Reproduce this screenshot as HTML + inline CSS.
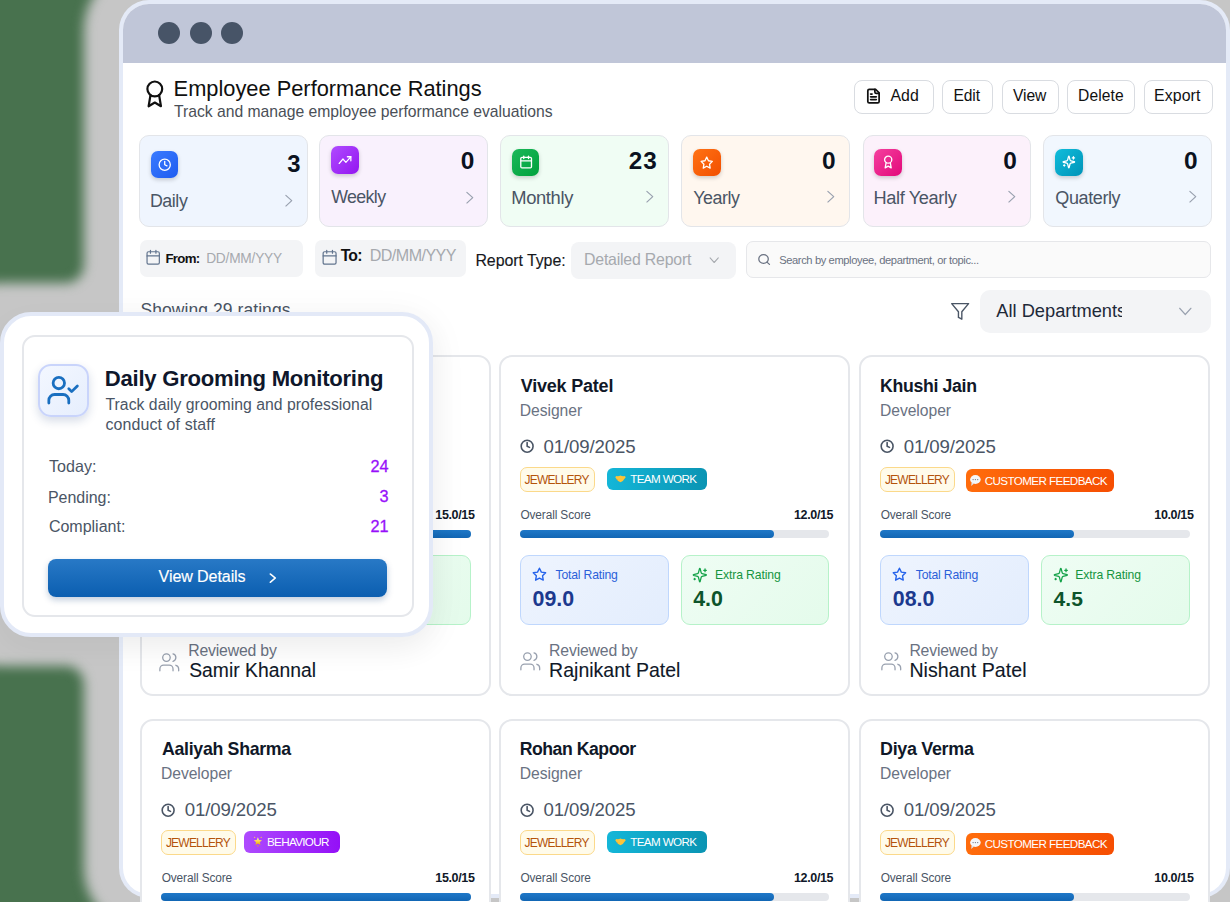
<!DOCTYPE html>
<html><head><meta charset="utf-8"><title>Employee Performance Ratings</title><style>
html,body{margin:0;padding:0;}
body{width:1230px;height:902px;overflow:hidden;position:relative;background:#48724e;font-family:"Liberation Sans", sans-serif;}
.a{position:absolute;box-sizing:border-box;}
.t{position:absolute;line-height:1;white-space:nowrap;}
svg.a{overflow:visible;}
</style></head><body>
<svg class="a" style="left:0;top:0;filter:blur(6px);" width="1230" height="902" viewBox="0 0 1230 902"><g fill="#c6c6c6"><rect x="84" y="-35" width="1200" height="968" rx="65" ry="65"/><rect x="-60" y="283" width="522" height="383" rx="60" ry="60"/><path d="M 84 265 L 84 283 L 66 283 A 18 18 0 0 0 84 265 Z"/><path d="M 84 684 L 84 666 L 66 666 A 18 18 0 0 1 84 684 Z"/></g></svg>
<div class="a" style="left:119px;top:0px;width:1111px;height:898px;background:#e4eaf7;border-radius:30px;"></div>
<div class="a" style="left:123px;top:4px;width:1103px;height:890px;background:#ffffff;border-radius:26px;overflow:hidden;"></div>
<div class="a" style="left:123px;top:4px;width:1103px;height:59px;background:#c0c6d8;border-radius:26px 26px 0 0;"></div>
<div class="a" style="left:158px;top:22px;width:22px;height:22px;background:#475467;border-radius:50%;"></div>
<div class="a" style="left:190px;top:22px;width:22px;height:22px;background:#475467;border-radius:50%;"></div>
<div class="a" style="left:221px;top:22px;width:22px;height:22px;background:#475467;border-radius:50%;"></div>
<svg class="a" style="left:139.7px;top:78.62px;" width="29.6" height="29.76" viewBox="0 0 24 24" preserveAspectRatio="none" fill="none" stroke="#101010" stroke-width="1.779" stroke-linecap="round" stroke-linejoin="round"><circle cx="12" cy="8" r="6"/><path d="M15.477 12.89 17 22l-5-3-5 3 1.523-9.11"/></svg>
<div class="t" id="t1" style="top:78px;font-size:21.83px;color:#101010;letter-spacing:-0.005px;left:173.6px;">Employee Performance Ratings</div>
<div class="t" id="t2" style="top:104px;font-size:15.72px;color:#4a4f57;letter-spacing:-0.020px;left:174px;">Track and manage employee performance evaluations</div>
<div class="a" style="left:854px;top:80.3px;width:80px;height:33.5px;background:#fff;border:1px solid #d9dce1;border-radius:8px;"></div>
<div class="t" id="t3" style="top:88px;font-size:15.85px;color:#111111;letter-spacing:0.110px;left:890.4px;">Add</div>
<div class="a" style="left:942px;top:80.3px;width:50.5px;height:33.5px;background:#fff;border:1px solid #d9dce1;border-radius:8px;"></div>
<div class="t" id="t4" style="top:88px;font-size:15.61px;color:#111111;letter-spacing:-0.087px;left:953.4px;">Edit</div>
<div class="a" style="left:1001.7px;top:80.3px;width:57.3px;height:33.5px;background:#fff;border:1px solid #d9dce1;border-radius:8px;"></div>
<div class="t" id="t5" style="top:88px;font-size:15.64px;color:#111111;letter-spacing:-0.100px;left:1013px;">View</div>
<div class="a" style="left:1067.3px;top:80.3px;width:67.7px;height:33.5px;background:#fff;border:1px solid #d9dce1;border-radius:8px;"></div>
<div class="t" id="t6" style="top:88px;font-size:15.61px;color:#111111;letter-spacing:0.112px;left:1078px;">Delete</div>
<div class="a" style="left:1144.4px;top:80.3px;width:68.4px;height:33.5px;background:#fff;border:1px solid #d9dce1;border-radius:8px;"></div>
<div class="t" id="t7" style="top:88px;font-size:15.9px;color:#111111;letter-spacing:0.098px;left:1154px;">Export</div>
<svg class="a" style="left:865.03px;top:88.19px;" width="16.95" height="16.32" viewBox="0 0 24 24" preserveAspectRatio="none" fill="none" stroke="#111111" stroke-width="2.453" stroke-linecap="round" stroke-linejoin="round"><path d="M15 2H6a2 2 0 0 0-2 2v16a2 2 0 0 0 2 2h12a2 2 0 0 0 2-2V7Z"/><path d="M14 2v4a2 2 0 0 0 2 2h4"/><path d="M10 9H8"/><path d="M16 13H8"/><path d="M16 17H8"/></svg>
<div class="a" style="left:139px;top:135.1px;width:169px;height:91.6px;background:#eff5fe;border:1px solid #e3e5e9;border-radius:10px;"></div>
<div class="a" style="left:150.6px;top:150.5px;width:27.5px;height:27.5px;background:linear-gradient(135deg,#3a7bff,#1f5cf0);border-radius:7px;box-shadow:0 2px 4px rgba(0,0,0,0.18);"></div>
<svg class="a" style="left:157.63px;top:157.53px;" width="13.44" height="13.44" viewBox="0 0 24 24" preserveAspectRatio="none" fill="none" stroke="#ffffff" stroke-width="2.321" stroke-linecap="round" stroke-linejoin="round"><circle cx="12" cy="12" r="10"/><polyline points="12 6 12 12 16 14"/></svg>
<div class="t" id="t8" style="top:152px;font-size:23.81px;color:#0b1220;font-weight:700;right:929.57px;">3</div>
<div class="t" id="t9" style="top:193px;font-size:17.84px;color:#4a5565;letter-spacing:-0.428px;left:149.9px;">Daily</div>
<svg class="a" style="left:277.1px;top:190.2px;" width="23.6" height="21.4" viewBox="0 0 24 24" preserveAspectRatio="none" fill="none" stroke="#99a1af" stroke-width="1.173" stroke-linecap="round" stroke-linejoin="round"><path d="m9 18 6-6-6-6"/></svg>
<div class="a" style="left:319.4px;top:135.1px;width:169px;height:91.6px;background:#f9f1fd;border:1px solid #e3e5e9;border-radius:10px;"></div>
<div class="a" style="left:331px;top:146.4px;width:27.5px;height:27.5px;background:linear-gradient(135deg,#b04cff,#9315f0);border-radius:7px;box-shadow:0 2px 4px rgba(0,0,0,0.18);"></div>
<svg class="a" style="left:337.78px;top:151.86px;" width="14.04" height="16.08" viewBox="0 0 24 24" preserveAspectRatio="none" fill="none" stroke="#ffffff" stroke-width="2.072" stroke-linecap="round" stroke-linejoin="round"><polyline points="22 7 13.5 15.5 8.5 10.5 2 17"/><polyline points="16 7 22 7 22 13"/></svg>
<div class="t" id="t10" style="top:149px;font-size:24.43px;color:#0b1220;font-weight:700;right:755.62px;">0</div>
<div class="t" id="t11" style="top:189px;font-size:17.76px;color:#4a5565;letter-spacing:-0.619px;left:331.3px;">Weekly</div>
<svg class="a" style="left:457.5px;top:186.7px;" width="23.6" height="21.4" viewBox="0 0 24 24" preserveAspectRatio="none" fill="none" stroke="#99a1af" stroke-width="1.173" stroke-linecap="round" stroke-linejoin="round"><path d="m9 18 6-6-6-6"/></svg>
<div class="a" style="left:500.3px;top:135.1px;width:168.7px;height:91.6px;background:#f0fdf4;border:1px solid #e3e5e9;border-radius:10px;"></div>
<div class="a" style="left:511.9px;top:148.6px;width:27.5px;height:27.5px;background:linear-gradient(135deg,#1cb85a,#00a13c);border-radius:7px;box-shadow:0 2px 4px rgba(0,0,0,0.18);"></div>
<svg class="a" style="left:518.57px;top:155.28px;" width="14.27" height="14.04" viewBox="0 0 24 24" preserveAspectRatio="none" fill="none" stroke="#ffffff" stroke-width="2.204" stroke-linecap="round" stroke-linejoin="round"><rect width="18" height="18" x="3" y="4" rx="2"/><path d="M16 2v4"/><path d="M8 2v4"/><path d="M3 10h18"/></svg>
<div class="t" id="t12" style="top:149px;font-size:24.24px;color:#0b1220;font-weight:700;letter-spacing:1.022px;right:572.3px;">23</div>
<div class="t" id="t13" style="top:189px;font-size:18.36px;color:#4a5565;letter-spacing:-0.351px;left:511.2px;">Monthly</div>
<svg class="a" style="left:638.1px;top:186.4px;" width="23.6" height="21.4" viewBox="0 0 24 24" preserveAspectRatio="none" fill="none" stroke="#99a1af" stroke-width="1.173" stroke-linecap="round" stroke-linejoin="round"><path d="m9 18 6-6-6-6"/></svg>
<div class="a" style="left:681.4px;top:135.1px;width:168.3px;height:91.6px;background:#fff7ef;border:1px solid #e3e5e9;border-radius:10px;"></div>
<div class="a" style="left:693px;top:148.6px;width:27.5px;height:27.5px;background:linear-gradient(135deg,#ff7214,#f24f00);border-radius:7px;box-shadow:0 2px 4px rgba(0,0,0,0.18);"></div>
<svg class="a" style="left:700.03px;top:155.59px;" width="13.44" height="13.88" viewBox="0 0 24 24" preserveAspectRatio="none" fill="none" stroke="#ffffff" stroke-width="2.284" stroke-linecap="round" stroke-linejoin="round"><polygon points="12 2 15.09 8.26 22 9.27 17 14.14 18.18 21.02 12 17.77 5.82 21.02 7 14.14 2 9.27 8.91 8.26 12 2"/></svg>
<div class="t" id="t14" style="top:149px;font-size:24.43px;color:#0b1220;font-weight:700;right:394.32px;">0</div>
<div class="t" id="t15" style="top:190px;font-size:17.85px;color:#4a5565;letter-spacing:-0.463px;left:693.3px;">Yearly</div>
<svg class="a" style="left:818.8px;top:186.4px;" width="23.6" height="21.4" viewBox="0 0 24 24" preserveAspectRatio="none" fill="none" stroke="#99a1af" stroke-width="1.173" stroke-linecap="round" stroke-linejoin="round"><path d="m9 18 6-6-6-6"/></svg>
<div class="a" style="left:862.6px;top:135.1px;width:168.3px;height:91.6px;background:#fcf1fb;border:1px solid #e3e5e9;border-radius:10px;"></div>
<div class="a" style="left:874.2px;top:148.6px;width:27.5px;height:27.5px;background:linear-gradient(135deg,#f5409f,#e2097a);border-radius:7px;box-shadow:0 2px 4px rgba(0,0,0,0.18);"></div>
<svg class="a" style="left:880.75px;top:155.38px;" width="14.4" height="14.04" viewBox="0 0 24 24" preserveAspectRatio="none" fill="none" stroke="#ffffff" stroke-width="2.194" stroke-linecap="round" stroke-linejoin="round"><circle cx="12" cy="8" r="6"/><path d="M15.477 12.89 17 22l-5-3-5 3 1.523-9.11"/></svg>
<div class="t" id="t16" style="top:149px;font-size:24.43px;color:#0b1220;font-weight:700;right:213.12px;">0</div>
<div class="t" id="t17" style="top:189px;font-size:18.18px;color:#4a5565;letter-spacing:-0.362px;left:873.5px;">Half Yearly</div>
<svg class="a" style="left:1000px;top:186.4px;" width="23.6" height="21.4" viewBox="0 0 24 24" preserveAspectRatio="none" fill="none" stroke="#99a1af" stroke-width="1.173" stroke-linecap="round" stroke-linejoin="round"><path d="m9 18 6-6-6-6"/></svg>
<div class="a" style="left:1043.4px;top:135.1px;width:168.3px;height:91.6px;background:#f1f7fe;border:1px solid #e3e5e9;border-radius:10px;"></div>
<div class="a" style="left:1055px;top:148.6px;width:27.5px;height:27.5px;background:linear-gradient(135deg,#10bddb,#0093b8);border-radius:7px;box-shadow:0 2px 4px rgba(0,0,0,0.18);"></div>
<svg class="a" style="left:1061.8px;top:155.37px;" width="13.69" height="13.95" viewBox="0 0 24 24" preserveAspectRatio="none" fill="none" stroke="#ffffff" stroke-width="2.257" stroke-linecap="round" stroke-linejoin="round"><path d="M9.937 15.5A2 2 0 0 0 8.5 14.063l-6.135-1.582a.5.5 0 0 1 0-.962L8.5 9.936A2 2 0 0 0 9.937 8.5l1.582-6.135a.5.5 0 0 1 .963 0L14.063 8.5A2 2 0 0 0 15.5 9.937l6.135 1.581a.5.5 0 0 1 0 .964L15.5 14.063a2 2 0 0 0-1.437 1.437l-1.582 6.135a.5.5 0 0 1-.963 0z"/><path d="M20 3v4"/><path d="M22 5h-4"/><path d="M4 17v2"/><path d="M5 18H3"/></svg>
<div class="t" id="t18" style="top:149px;font-size:24.43px;color:#0b1220;font-weight:700;right:32.32px;">0</div>
<div class="t" id="t19" style="top:189px;font-size:18.01px;color:#4a5565;letter-spacing:-0.390px;left:1055.3px;">Quaterly</div>
<svg class="a" style="left:1180.8px;top:186.4px;" width="23.6" height="21.4" viewBox="0 0 24 24" preserveAspectRatio="none" fill="none" stroke="#99a1af" stroke-width="1.173" stroke-linecap="round" stroke-linejoin="round"><path d="m9 18 6-6-6-6"/></svg>
<div class="a" style="left:140.1px;top:240.1px;width:162.9px;height:36.6px;background:#f3f4f6;border-radius:7px;"></div>
<svg class="a" style="left:145.25px;top:249.22px;" width="16.4" height="16.56" viewBox="0 0 24 24" preserveAspectRatio="none" fill="none" stroke="#62748e" stroke-width="1.748" stroke-linecap="round" stroke-linejoin="round"><rect width="18" height="18" x="3" y="4" rx="2"/><path d="M16 2v4"/><path d="M8 2v4"/><path d="M3 10h18"/></svg>
<div class="t" id="t20" style="top:252px;font-size:13.25px;color:#111111;font-weight:700;letter-spacing:-0.681px;left:165.4px;">From:</div>
<div class="t" id="t21" style="top:252px;font-size:13.73px;color:#a6a9ae;letter-spacing:-0.224px;left:206.2px;">DD/MM/YYY</div>
<div class="a" style="left:315.1px;top:240.1px;width:150.5px;height:36.6px;background:#f3f4f6;border-radius:7px;"></div>
<svg class="a" style="left:321.35px;top:249.22px;" width="17.2" height="16.56" viewBox="0 0 24 24" preserveAspectRatio="none" fill="none" stroke="#62748e" stroke-width="1.706" stroke-linecap="round" stroke-linejoin="round"><rect width="18" height="18" x="3" y="4" rx="2"/><path d="M16 2v4"/><path d="M8 2v4"/><path d="M3 10h18"/></svg>
<div class="t" id="t22" style="top:248px;font-size:15.77px;color:#111111;font-weight:700;letter-spacing:-0.795px;left:340.7px;">To:</div>
<div class="t" id="t23" style="top:247px;font-size:16.09px;color:#a6a9ae;letter-spacing:-0.536px;left:369.7px;">DD/MM/YYY</div>
<div class="t" id="t24" style="top:253px;font-size:15.96px;color:#16181d;letter-spacing:-0.073px;-webkit-text-stroke:0.12px #16181d;left:475.4px;">Report Type:</div>
<div class="a" style="left:571.3px;top:241.8px;width:165px;height:36.9px;background:#f3f4f6;border-radius:8px;"></div>
<div class="t" id="t25" style="top:252px;font-size:15.87px;color:#a6a9ae;letter-spacing:-0.199px;left:584px;">Detailed Report</div>
<svg class="a" style="left:706.45px;top:251.45px;" width="16.4" height="18.4" viewBox="0 0 24 24" preserveAspectRatio="none" fill="none" stroke="#a6a9ae" stroke-width="1.517" stroke-linecap="round" stroke-linejoin="round"><path d="m6 9 6 6 6-6"/></svg>
<div class="a" style="left:746px;top:240.6px;width:465px;height:37.8px;background:#fafafa;border:1px solid #e6e7ea;border-radius:7px;"></div>
<svg class="a" style="left:756.82px;top:252.87px;" width="14.27" height="13.07" viewBox="0 0 24 24" preserveAspectRatio="none" fill="none" stroke="#6a7282" stroke-width="2.107" stroke-linecap="round" stroke-linejoin="round"><circle cx="11" cy="11" r="8"/><path d="m21 21-4.3-4.3"/></svg>
<div class="t" id="t26" style="top:255px;font-size:11.17px;color:#6a7282;letter-spacing:-0.393px;left:779.2px;">Search by employee, department, or topic...</div>
<div class="t" id="t27" style="top:302px;font-size:17.48px;color:#4a5565;letter-spacing:0.080px;left:140.5px;">Showing 29 ratings</div>
<svg class="a" style="left:949.71px;top:301.3px;" width="20.28" height="20.8" viewBox="0 0 24 24" preserveAspectRatio="none" fill="none" stroke="#4a5565" stroke-width="1.636" stroke-linecap="round" stroke-linejoin="round"><polygon points="22 3 2 3 10 12.46 10 19 14 21 14 12.46 22 3"/></svg>
<div class="a" style="left:979.5px;top:290.2px;width:231px;height:43px;background:#f3f4f6;border-radius:10px;"></div>
<div class="a" style="left:994px;top:296px;width:127.5px;height:30px;overflow:hidden;">
<div class="t" id="t28" style="top:6px;font-size:18.27px;color:#1e2939;left:2.3px;">All Departments</div>
</div>
<svg class="a" style="left:1173.95px;top:299.3px;" width="22.6" height="24.8" viewBox="0 0 24 24" preserveAspectRatio="none" fill="none" stroke="#99a1af" stroke-width="1.215" stroke-linecap="round" stroke-linejoin="round"><path d="m6 9 6 6 6-6"/></svg>
<div class="a" style="left:140.3px;top:355.4px;width:351px;height:340.5px;background:#fff;border:2px solid #e5e7eb;border-radius:13px;"></div>
<div class="t" id="t29" style="top:377px;font-size:18.38px;color:#101828;font-weight:700;left:162px;">Amit Sharma</div>
<div class="t" id="t30" style="top:403px;font-size:15.67px;color:#6a7282;letter-spacing:-0.044px;left:161px;">Developer</div>
<svg class="a" style="left:161.41px;top:439.4px;" width="14.28" height="14.4" viewBox="0 0 24 24" preserveAspectRatio="none" fill="none" stroke="#4a5565" stroke-width="2.678" stroke-linecap="round" stroke-linejoin="round"><circle cx="12" cy="12" r="10"/><polyline points="12 6 12 12 16 14"/></svg>
<div class="t" id="t31" style="top:438px;font-size:18.67px;color:#4a5565;letter-spacing:-0.133px;left:184.7px;">01/09/2025</div>
<div class="a" style="left:161px;top:467.2px;width:75.3px;height:24.5px;background:#fffbea;border:1px solid #fbd98a;border-radius:7px;"></div>
<div class="t" id="t32" style="top:475px;font-size:11.97px;color:#b4540a;letter-spacing:-0.759px;left:165.9px;">JEWELLERY</div>
<div class="a" style="left:248.4px;top:467.6px;width:99.6px;height:22.4px;background:linear-gradient(90deg,#14b6d8,#0a94b3);border-radius:6px;"></div>
<svg class="a" style="left:256.1px;top:474.8px" width="11" height="7.6" viewBox="0 0 12 8"><path d="M0.3 2.2 Q1.2 0.6 2.8 1.1 L4.6 0.9 Q6 -0.2 7.4 0.9 L9.2 1.1 Q10.8 0.6 11.7 2.2 L10.2 4.2 Q8.2 7.8 6 7.8 Q3.6 7.4 1.8 4.4 Z" fill="#fcc43a"/><path d="M1.6 4.2 L3.2 6.2 L2.4 4.2 Z M10.4 4 L9.2 5.6 L10.9 3.3 Z" fill="#f08a1c"/></svg>
<div class="t" id="t33" style="top:473px;font-size:11.67px;color:#ffffff;letter-spacing:-0.625px;left:271.5px;">TEAM WORK</div>
<div class="t" id="t34" style="top:510px;font-size:11.87px;color:#4a5565;letter-spacing:-0.112px;left:161.7px;">Overall Score</div>
<div class="t" id="t35" style="top:509px;font-size:12.53px;color:#101828;font-weight:700;letter-spacing:-0.366px;right:755.51px;">15.0/15</div>
<div class="a" style="left:160.9px;top:530.1px;width:309.9px;height:7.5px;background:#e5e7eb;border-radius:4px;"></div>
<div class="a" style="left:160.9px;top:530.1px;width:309.9px;height:7.5px;background:linear-gradient(180deg,#1f78c8,#1266b4);border-radius:4px;"></div>
<div class="a" style="left:161.1px;top:555px;width:149.2px;height:69.9px;background:linear-gradient(135deg,#eef4fe,#e3edfd);border:1px solid #bfd7fd;border-radius:9px;"></div>
<svg class="a" style="left:172.96px;top:567.15px;" width="14.88" height="15.02" viewBox="0 0 24 24" preserveAspectRatio="none" fill="none" stroke="#2563eb" stroke-width="2.248" stroke-linecap="round" stroke-linejoin="round"><polygon points="12 2 15.09 8.26 22 9.27 17 14.14 18.18 21.02 12 17.77 5.82 21.02 7 14.14 2 9.27 8.91 8.26 12 2"/></svg>
<div class="t" id="t36" style="top:569px;font-size:12.22px;color:#2b5fd9;letter-spacing:-0.194px;left:196.8px;">Total Rating</div>
<div class="t" id="t37" style="top:588px;font-size:21.66px;color:#1c398e;font-weight:700;letter-spacing:0.198px;left:172.8px;">10.0</div>
<div class="a" style="left:321.8px;top:555px;width:148.9px;height:69.9px;background:linear-gradient(135deg,#effdf4,#e4fbeb);border:1px solid #b6f2c9;border-radius:9px;"></div>
<svg class="a" style="left:333.7px;top:566.86px;" width="15.65" height="16.07" viewBox="0 0 24 24" preserveAspectRatio="none" fill="none" stroke="#16a34a" stroke-width="1.967" stroke-linecap="round" stroke-linejoin="round"><path d="M9.937 15.5A2 2 0 0 0 8.5 14.063l-6.135-1.582a.5.5 0 0 1 0-.962L8.5 9.936A2 2 0 0 0 9.937 8.5l1.582-6.135a.5.5 0 0 1 .963 0L14.063 8.5A2 2 0 0 0 15.5 9.937l6.135 1.581a.5.5 0 0 1 0 .964L15.5 14.063a2 2 0 0 0-1.437 1.437l-1.582 6.135a.5.5 0 0 1-.963 0z"/><path d="M20 3v4"/><path d="M22 5h-4"/><path d="M4 17v2"/><path d="M5 18H3"/></svg>
<div class="t" id="t38" style="top:569px;font-size:12.19px;color:#15953f;letter-spacing:-0.126px;left:356.3px;">Extra Rating</div>
<div class="t" id="t39" style="top:589px;font-size:21.4px;color:#0d542b;font-weight:700;letter-spacing:-0.120px;left:334.6px;">5.0</div>
<svg class="a" style="left:158.47px;top:651.22px;" width="22.56" height="22.67" viewBox="0 0 24 24" preserveAspectRatio="none" fill="none" stroke="#99a1af" stroke-width="1.380" stroke-linecap="round" stroke-linejoin="round"><path d="M16 21v-2a4 4 0 0 0-4-4H6a4 4 0 0 0-4 4v2"/><circle cx="9" cy="7" r="4"/><path d="M22 21v-2a4 4 0 0 0-3-3.87"/><path d="M16 3.13a4 4 0 0 1 0 7.75"/></svg>
<div class="t" id="t40" style="top:643px;font-size:15.81px;color:#6a7282;letter-spacing:-0.184px;left:188.2px;">Reviewed by</div>
<div class="t" id="t41" style="top:661px;font-size:19.31px;color:#101828;letter-spacing:0.018px;-webkit-text-stroke:0.12px #101828;left:189.2px;">Samir Khannal</div>
<div class="a" style="left:499px;top:355.4px;width:351px;height:340.5px;background:#fff;border:2px solid #e5e7eb;border-radius:13px;"></div>
<div class="t" id="t42" style="top:377px;font-size:18px;color:#101828;font-weight:700;letter-spacing:-0.204px;left:520.7px;">Vivek Patel</div>
<div class="t" id="t43" style="top:403px;font-size:15.69px;color:#6a7282;letter-spacing:-0.037px;left:519.7px;">Designer</div>
<svg class="a" style="left:520.11px;top:439.4px;" width="14.28" height="14.4" viewBox="0 0 24 24" preserveAspectRatio="none" fill="none" stroke="#4a5565" stroke-width="2.678" stroke-linecap="round" stroke-linejoin="round"><circle cx="12" cy="12" r="10"/><polyline points="12 6 12 12 16 14"/></svg>
<div class="t" id="t44" style="top:438px;font-size:18.67px;color:#4a5565;letter-spacing:-0.133px;left:543.4px;">01/09/2025</div>
<div class="a" style="left:519.7px;top:467.2px;width:75.3px;height:24.5px;background:#fffbea;border:1px solid #fbd98a;border-radius:7px;"></div>
<div class="t" id="t45" style="top:475px;font-size:11.97px;color:#b4540a;letter-spacing:-0.759px;left:524.6px;">JEWELLERY</div>
<div class="a" style="left:607.1px;top:467.6px;width:99.6px;height:22.4px;background:linear-gradient(90deg,#14b6d8,#0a94b3);border-radius:6px;"></div>
<svg class="a" style="left:614.8px;top:474.8px" width="11" height="7.6" viewBox="0 0 12 8"><path d="M0.3 2.2 Q1.2 0.6 2.8 1.1 L4.6 0.9 Q6 -0.2 7.4 0.9 L9.2 1.1 Q10.8 0.6 11.7 2.2 L10.2 4.2 Q8.2 7.8 6 7.8 Q3.6 7.4 1.8 4.4 Z" fill="#fcc43a"/><path d="M1.6 4.2 L3.2 6.2 L2.4 4.2 Z M10.4 4 L9.2 5.6 L10.9 3.3 Z" fill="#f08a1c"/></svg>
<div class="t" id="t46" style="top:473px;font-size:11.67px;color:#ffffff;letter-spacing:-0.625px;left:630.2px;">TEAM WORK</div>
<div class="t" id="t47" style="top:510px;font-size:11.87px;color:#4a5565;letter-spacing:-0.112px;left:520.4px;">Overall Score</div>
<div class="t" id="t48" style="top:509px;font-size:12.53px;color:#101828;font-weight:700;letter-spacing:-0.366px;right:396.81px;">12.0/15</div>
<div class="a" style="left:519.6px;top:530.1px;width:309.9px;height:7.5px;background:#e5e7eb;border-radius:4px;"></div>
<div class="a" style="left:519.6px;top:530.1px;width:254.3px;height:7.5px;background:linear-gradient(180deg,#1f78c8,#1266b4);border-radius:4px;"></div>
<div class="a" style="left:519.8px;top:555px;width:149.2px;height:69.9px;background:linear-gradient(135deg,#eef4fe,#e3edfd);border:1px solid #bfd7fd;border-radius:9px;"></div>
<svg class="a" style="left:531.66px;top:567.15px;" width="14.88" height="15.02" viewBox="0 0 24 24" preserveAspectRatio="none" fill="none" stroke="#2563eb" stroke-width="2.248" stroke-linecap="round" stroke-linejoin="round"><polygon points="12 2 15.09 8.26 22 9.27 17 14.14 18.18 21.02 12 17.77 5.82 21.02 7 14.14 2 9.27 8.91 8.26 12 2"/></svg>
<div class="t" id="t49" style="top:569px;font-size:12.22px;color:#2b5fd9;letter-spacing:-0.194px;left:555.5px;">Total Rating</div>
<div class="t" id="t50" style="top:589px;font-size:21.39px;color:#1c398e;font-weight:700;letter-spacing:-0.005px;left:532.5px;">09.0</div>
<div class="a" style="left:680.5px;top:555px;width:148.9px;height:69.9px;background:linear-gradient(135deg,#effdf4,#e4fbeb);border:1px solid #b6f2c9;border-radius:9px;"></div>
<svg class="a" style="left:692.4px;top:566.86px;" width="15.65" height="16.07" viewBox="0 0 24 24" preserveAspectRatio="none" fill="none" stroke="#16a34a" stroke-width="1.967" stroke-linecap="round" stroke-linejoin="round"><path d="M9.937 15.5A2 2 0 0 0 8.5 14.063l-6.135-1.582a.5.5 0 0 1 0-.962L8.5 9.936A2 2 0 0 0 9.937 8.5l1.582-6.135a.5.5 0 0 1 .963 0L14.063 8.5A2 2 0 0 0 15.5 9.937l6.135 1.581a.5.5 0 0 1 0 .964L15.5 14.063a2 2 0 0 0-1.437 1.437l-1.582 6.135a.5.5 0 0 1-.963 0z"/><path d="M20 3v4"/><path d="M22 5h-4"/><path d="M4 17v2"/><path d="M5 18H3"/></svg>
<div class="t" id="t51" style="top:569px;font-size:12.19px;color:#15953f;letter-spacing:-0.126px;left:715px;">Extra Rating</div>
<div class="t" id="t52" style="top:589px;font-size:21.4px;color:#0d542b;font-weight:700;letter-spacing:-0.120px;left:693.3px;">4.0</div>
<svg class="a" style="left:519.37px;top:650.42px;" width="22.56" height="22.67" viewBox="0 0 24 24" preserveAspectRatio="none" fill="none" stroke="#99a1af" stroke-width="1.380" stroke-linecap="round" stroke-linejoin="round"><path d="M16 21v-2a4 4 0 0 0-4-4H6a4 4 0 0 0-4 4v2"/><circle cx="9" cy="7" r="4"/><path d="M22 21v-2a4 4 0 0 0-3-3.87"/><path d="M16 3.13a4 4 0 0 1 0 7.75"/></svg>
<div class="t" id="t53" style="top:643px;font-size:15.81px;color:#6a7282;letter-spacing:-0.184px;left:549.1px;">Reviewed by</div>
<div class="t" id="t54" style="top:661px;font-size:19.48px;color:#101828;letter-spacing:0.027px;-webkit-text-stroke:0.12px #101828;left:549.1px;">Rajnikant Patel</div>
<div class="a" style="left:859.3px;top:355.4px;width:351px;height:340.5px;background:#fff;border:2px solid #e5e7eb;border-radius:13px;"></div>
<div class="t" id="t55" style="top:378px;font-size:17.68px;color:#101828;font-weight:700;letter-spacing:-0.316px;left:880px;">Khushi Jain</div>
<div class="t" id="t56" style="top:403px;font-size:15.67px;color:#6a7282;letter-spacing:-0.044px;left:880px;">Developer</div>
<svg class="a" style="left:880.41px;top:439.4px;" width="14.28" height="14.4" viewBox="0 0 24 24" preserveAspectRatio="none" fill="none" stroke="#4a5565" stroke-width="2.678" stroke-linecap="round" stroke-linejoin="round"><circle cx="12" cy="12" r="10"/><polyline points="12 6 12 12 16 14"/></svg>
<div class="t" id="t57" style="top:438px;font-size:18.67px;color:#4a5565;letter-spacing:-0.133px;left:903.7px;">01/09/2025</div>
<div class="a" style="left:880px;top:467.2px;width:75.3px;height:24.5px;background:#fffbea;border:1px solid #fbd98a;border-radius:7px;"></div>
<div class="t" id="t58" style="top:475px;font-size:11.97px;color:#b4540a;letter-spacing:-0.759px;left:884.9px;">JEWELLERY</div>
<div class="a" style="left:966px;top:469.3px;width:147.5px;height:22.4px;background:linear-gradient(90deg,#ff6c0c,#f64e02);border-radius:6px;"></div>
<svg class="a" style="left:970.1px;top:474.5px" width="10.8" height="11.2" viewBox="0 0 10.8 11.2"><ellipse cx="5.4" cy="4.5" rx="5.3" ry="4.4" fill="#f4f6f9"/><path d="M1.6 7.2 L1.2 11 L4 8.4 Z" fill="#dfe6ee"/><circle cx="3.1" cy="4.6" r="0.65" fill="#707782"/><circle cx="5.4" cy="4.6" r="0.65" fill="#707782"/><circle cx="7.7" cy="4.6" r="0.65" fill="#707782"/></svg>
<div class="t" id="t59" style="top:475px;font-size:11.66px;color:#ffffff;letter-spacing:-0.605px;left:984.7px;">CUSTOMER FEEDBACK</div>
<div class="t" id="t60" style="top:510px;font-size:11.87px;color:#4a5565;letter-spacing:-0.112px;left:880.7px;">Overall Score</div>
<div class="t" id="t61" style="top:509px;font-size:12.53px;color:#101828;font-weight:700;letter-spacing:-0.366px;right:36.51px;">10.0/15</div>
<div class="a" style="left:879.9px;top:530.1px;width:309.9px;height:7.5px;background:#e5e7eb;border-radius:4px;"></div>
<div class="a" style="left:879.9px;top:530.1px;width:194.2px;height:7.5px;background:linear-gradient(180deg,#1f78c8,#1266b4);border-radius:4px;"></div>
<div class="a" style="left:880.1px;top:555px;width:149.2px;height:69.9px;background:linear-gradient(135deg,#eef4fe,#e3edfd);border:1px solid #bfd7fd;border-radius:9px;"></div>
<svg class="a" style="left:891.96px;top:567.15px;" width="14.88" height="15.02" viewBox="0 0 24 24" preserveAspectRatio="none" fill="none" stroke="#2563eb" stroke-width="2.248" stroke-linecap="round" stroke-linejoin="round"><polygon points="12 2 15.09 8.26 22 9.27 17 14.14 18.18 21.02 12 17.77 5.82 21.02 7 14.14 2 9.27 8.91 8.26 12 2"/></svg>
<div class="t" id="t62" style="top:569px;font-size:12.22px;color:#2b5fd9;letter-spacing:-0.194px;left:915.8px;">Total Rating</div>
<div class="t" id="t63" style="top:589px;font-size:21.39px;color:#1c398e;font-weight:700;letter-spacing:-0.005px;left:892.8px;">08.0</div>
<div class="a" style="left:1040.8px;top:555px;width:148.9px;height:69.9px;background:linear-gradient(135deg,#effdf4,#e4fbeb);border:1px solid #b6f2c9;border-radius:9px;"></div>
<svg class="a" style="left:1052.7px;top:566.86px;" width="15.65" height="16.07" viewBox="0 0 24 24" preserveAspectRatio="none" fill="none" stroke="#16a34a" stroke-width="1.967" stroke-linecap="round" stroke-linejoin="round"><path d="M9.937 15.5A2 2 0 0 0 8.5 14.063l-6.135-1.582a.5.5 0 0 1 0-.962L8.5 9.936A2 2 0 0 0 9.937 8.5l1.582-6.135a.5.5 0 0 1 .963 0L14.063 8.5A2 2 0 0 0 15.5 9.937l6.135 1.581a.5.5 0 0 1 0 .964L15.5 14.063a2 2 0 0 0-1.437 1.437l-1.582 6.135a.5.5 0 0 1-.963 0z"/><path d="M20 3v4"/><path d="M22 5h-4"/><path d="M4 17v2"/><path d="M5 18H3"/></svg>
<div class="t" id="t64" style="top:569px;font-size:12.19px;color:#15953f;letter-spacing:-0.126px;left:1075.3px;">Extra Rating</div>
<div class="t" id="t65" style="top:588px;font-size:21.03px;color:#0d542b;font-weight:700;letter-spacing:0.037px;left:1053.6px;">4.5</div>
<svg class="a" style="left:879.67px;top:650.42px;" width="22.56" height="22.67" viewBox="0 0 24 24" preserveAspectRatio="none" fill="none" stroke="#99a1af" stroke-width="1.380" stroke-linecap="round" stroke-linejoin="round"><path d="M16 21v-2a4 4 0 0 0-4-4H6a4 4 0 0 0-4 4v2"/><circle cx="9" cy="7" r="4"/><path d="M22 21v-2a4 4 0 0 0-3-3.87"/><path d="M16 3.13a4 4 0 0 1 0 7.75"/></svg>
<div class="t" id="t66" style="top:643px;font-size:15.81px;color:#6a7282;letter-spacing:-0.184px;left:909.4px;">Reviewed by</div>
<div class="t" id="t67" style="top:661px;font-size:19.58px;color:#101828;letter-spacing:0.067px;-webkit-text-stroke:0.12px #101828;left:909.4px;">Nishant Patel</div>
<div class="a" style="left:140.3px;top:718.6px;width:351px;height:340.5px;background:#fff;border:2px solid #e5e7eb;border-radius:13px;"></div>
<div class="t" id="t68" style="top:741px;font-size:17.75px;color:#101828;font-weight:700;letter-spacing:-0.309px;left:162px;">Aaliyah Sharma</div>
<div class="t" id="t69" style="top:766px;font-size:15.67px;color:#6a7282;letter-spacing:-0.044px;left:161px;">Developer</div>
<svg class="a" style="left:161.41px;top:802.6px;" width="14.28" height="14.4" viewBox="0 0 24 24" preserveAspectRatio="none" fill="none" stroke="#4a5565" stroke-width="2.678" stroke-linecap="round" stroke-linejoin="round"><circle cx="12" cy="12" r="10"/><polyline points="12 6 12 12 16 14"/></svg>
<div class="t" id="t70" style="top:801px;font-size:18.67px;color:#4a5565;letter-spacing:-0.133px;left:184.7px;">01/09/2025</div>
<div class="a" style="left:161px;top:830.4px;width:75.3px;height:24.5px;background:#fffbea;border:1px solid #fbd98a;border-radius:7px;"></div>
<div class="t" id="t71" style="top:838px;font-size:11.97px;color:#b4540a;letter-spacing:-0.759px;left:165.9px;">JEWELLERY</div>
<div class="a" style="left:243.9px;top:830.8px;width:96.3px;height:22.4px;background:linear-gradient(90deg,#ae4bfe,#9410f7);border-radius:6px;"></div>
<svg class="a" style="left:253.1px;top:836px" width="9.8" height="10.8" viewBox="0 0 24 26"><defs><linearGradient id="sg" x1="0" y1="0" x2="0" y2="1"><stop offset="0" stop-color="#fff6c8"/><stop offset="0.5" stop-color="#ffd447"/><stop offset="1" stop-color="#e9a800"/></linearGradient></defs><polygon points="12 3 14.8 9.6 22 10.2 16.5 14.8 18.3 22 12 18.2 5.7 22 7.5 14.8 2 10.2 9.2 9.6" fill="url(#sg)"/><circle cx="4" cy="3" r="1.6" fill="#ffcf3a"/><circle cx="20" cy="3" r="1.6" fill="#ffcf3a"/><circle cx="12" cy="24" r="1.6" fill="#f0a020"/></svg>
<div class="t" id="t72" style="top:836px;font-size:11.68px;color:#ffffff;letter-spacing:-0.682px;left:267px;">BEHAVIOUR</div>
<div class="t" id="t73" style="top:873px;font-size:11.87px;color:#4a5565;letter-spacing:-0.112px;left:161.7px;">Overall Score</div>
<div class="t" id="t74" style="top:872px;font-size:12.53px;color:#101828;font-weight:700;letter-spacing:-0.366px;right:755.51px;">15.0/15</div>
<div class="a" style="left:160.9px;top:893.3px;width:309.9px;height:7.5px;background:#e5e7eb;border-radius:4px;"></div>
<div class="a" style="left:160.9px;top:893.3px;width:309.9px;height:7.5px;background:linear-gradient(180deg,#1f78c8,#1266b4);border-radius:4px;"></div>
<div class="a" style="left:161.1px;top:918.2px;width:149.2px;height:69.9px;background:linear-gradient(135deg,#eef4fe,#e3edfd);border:1px solid #bfd7fd;border-radius:9px;"></div>
<svg class="a" style="left:172.96px;top:930.35px;" width="14.88" height="15.02" viewBox="0 0 24 24" preserveAspectRatio="none" fill="none" stroke="#2563eb" stroke-width="2.248" stroke-linecap="round" stroke-linejoin="round"><polygon points="12 2 15.09 8.26 22 9.27 17 14.14 18.18 21.02 12 17.77 5.82 21.02 7 14.14 2 9.27 8.91 8.26 12 2"/></svg>
<div class="t" id="t75" style="top:932px;font-size:12.22px;color:#2b5fd9;letter-spacing:-0.194px;left:196.8px;">Total Rating</div>
<div class="t" id="t76" style="top:951px;font-size:21.66px;color:#1c398e;font-weight:700;letter-spacing:0.198px;left:172.8px;">10.0</div>
<div class="a" style="left:321.8px;top:918.2px;width:148.9px;height:69.9px;background:linear-gradient(135deg,#effdf4,#e4fbeb);border:1px solid #b6f2c9;border-radius:9px;"></div>
<svg class="a" style="left:333.7px;top:930.06px;" width="15.65" height="16.07" viewBox="0 0 24 24" preserveAspectRatio="none" fill="none" stroke="#16a34a" stroke-width="1.967" stroke-linecap="round" stroke-linejoin="round"><path d="M9.937 15.5A2 2 0 0 0 8.5 14.063l-6.135-1.582a.5.5 0 0 1 0-.962L8.5 9.936A2 2 0 0 0 9.937 8.5l1.582-6.135a.5.5 0 0 1 .963 0L14.063 8.5A2 2 0 0 0 15.5 9.937l6.135 1.581a.5.5 0 0 1 0 .964L15.5 14.063a2 2 0 0 0-1.437 1.437l-1.582 6.135a.5.5 0 0 1-.963 0z"/><path d="M20 3v4"/><path d="M22 5h-4"/><path d="M4 17v2"/><path d="M5 18H3"/></svg>
<div class="t" id="t77" style="top:932px;font-size:12.19px;color:#15953f;letter-spacing:-0.126px;left:356.3px;">Extra Rating</div>
<div class="t" id="t78" style="top:952px;font-size:21.4px;color:#0d542b;font-weight:700;letter-spacing:-0.120px;left:334.6px;">5.0</div>
<svg class="a" style="left:160.67px;top:1013.62px;" width="22.56" height="22.67" viewBox="0 0 24 24" preserveAspectRatio="none" fill="none" stroke="#99a1af" stroke-width="1.380" stroke-linecap="round" stroke-linejoin="round"><path d="M16 21v-2a4 4 0 0 0-4-4H6a4 4 0 0 0-4 4v2"/><circle cx="9" cy="7" r="4"/><path d="M22 21v-2a4 4 0 0 0-3-3.87"/><path d="M16 3.13a4 4 0 0 1 0 7.75"/></svg>
<div class="t" id="t79" style="top:1006px;font-size:15.81px;color:#6a7282;letter-spacing:-0.184px;left:190.4px;">Reviewed by</div>
<div class="t" id="t80" style="top:1024px;font-size:19.31px;color:#101828;letter-spacing:0.018px;-webkit-text-stroke:0.12px #101828;left:191.4px;">Samir Khannal</div>
<div class="a" style="left:499px;top:718.6px;width:351px;height:340.5px;background:#fff;border:2px solid #e5e7eb;border-radius:13px;"></div>
<div class="t" id="t81" style="top:741px;font-size:17.65px;color:#101828;font-weight:700;letter-spacing:-0.460px;left:519.7px;">Rohan Kapoor</div>
<div class="t" id="t82" style="top:766px;font-size:15.69px;color:#6a7282;letter-spacing:-0.037px;left:519.7px;">Designer</div>
<svg class="a" style="left:520.11px;top:802.6px;" width="14.28" height="14.4" viewBox="0 0 24 24" preserveAspectRatio="none" fill="none" stroke="#4a5565" stroke-width="2.678" stroke-linecap="round" stroke-linejoin="round"><circle cx="12" cy="12" r="10"/><polyline points="12 6 12 12 16 14"/></svg>
<div class="t" id="t83" style="top:801px;font-size:18.67px;color:#4a5565;letter-spacing:-0.133px;left:543.4px;">01/09/2025</div>
<div class="a" style="left:519.7px;top:830.4px;width:75.3px;height:24.5px;background:#fffbea;border:1px solid #fbd98a;border-radius:7px;"></div>
<div class="t" id="t84" style="top:838px;font-size:11.97px;color:#b4540a;letter-spacing:-0.759px;left:524.6px;">JEWELLERY</div>
<div class="a" style="left:607.1px;top:830.8px;width:99.6px;height:22.4px;background:linear-gradient(90deg,#14b6d8,#0a94b3);border-radius:6px;"></div>
<svg class="a" style="left:614.8px;top:838px" width="11" height="7.6" viewBox="0 0 12 8"><path d="M0.3 2.2 Q1.2 0.6 2.8 1.1 L4.6 0.9 Q6 -0.2 7.4 0.9 L9.2 1.1 Q10.8 0.6 11.7 2.2 L10.2 4.2 Q8.2 7.8 6 7.8 Q3.6 7.4 1.8 4.4 Z" fill="#fcc43a"/><path d="M1.6 4.2 L3.2 6.2 L2.4 4.2 Z M10.4 4 L9.2 5.6 L10.9 3.3 Z" fill="#f08a1c"/></svg>
<div class="t" id="t85" style="top:836px;font-size:11.67px;color:#ffffff;letter-spacing:-0.625px;left:630.2px;">TEAM WORK</div>
<div class="t" id="t86" style="top:873px;font-size:11.87px;color:#4a5565;letter-spacing:-0.112px;left:520.4px;">Overall Score</div>
<div class="t" id="t87" style="top:872px;font-size:12.53px;color:#101828;font-weight:700;letter-spacing:-0.366px;right:396.81px;">12.0/15</div>
<div class="a" style="left:519.6px;top:893.3px;width:309.9px;height:7.5px;background:#e5e7eb;border-radius:4px;"></div>
<div class="a" style="left:519.6px;top:893.3px;width:254.3px;height:7.5px;background:linear-gradient(180deg,#1f78c8,#1266b4);border-radius:4px;"></div>
<div class="a" style="left:519.8px;top:918.2px;width:149.2px;height:69.9px;background:linear-gradient(135deg,#eef4fe,#e3edfd);border:1px solid #bfd7fd;border-radius:9px;"></div>
<svg class="a" style="left:531.66px;top:930.35px;" width="14.88" height="15.02" viewBox="0 0 24 24" preserveAspectRatio="none" fill="none" stroke="#2563eb" stroke-width="2.248" stroke-linecap="round" stroke-linejoin="round"><polygon points="12 2 15.09 8.26 22 9.27 17 14.14 18.18 21.02 12 17.77 5.82 21.02 7 14.14 2 9.27 8.91 8.26 12 2"/></svg>
<div class="t" id="t88" style="top:932px;font-size:12.22px;color:#2b5fd9;letter-spacing:-0.194px;left:555.5px;">Total Rating</div>
<div class="t" id="t89" style="top:952px;font-size:21.39px;color:#1c398e;font-weight:700;letter-spacing:-0.005px;left:532.5px;">09.0</div>
<div class="a" style="left:680.5px;top:918.2px;width:148.9px;height:69.9px;background:linear-gradient(135deg,#effdf4,#e4fbeb);border:1px solid #b6f2c9;border-radius:9px;"></div>
<svg class="a" style="left:692.4px;top:930.06px;" width="15.65" height="16.07" viewBox="0 0 24 24" preserveAspectRatio="none" fill="none" stroke="#16a34a" stroke-width="1.967" stroke-linecap="round" stroke-linejoin="round"><path d="M9.937 15.5A2 2 0 0 0 8.5 14.063l-6.135-1.582a.5.5 0 0 1 0-.962L8.5 9.936A2 2 0 0 0 9.937 8.5l1.582-6.135a.5.5 0 0 1 .963 0L14.063 8.5A2 2 0 0 0 15.5 9.937l6.135 1.581a.5.5 0 0 1 0 .964L15.5 14.063a2 2 0 0 0-1.437 1.437l-1.582 6.135a.5.5 0 0 1-.963 0z"/><path d="M20 3v4"/><path d="M22 5h-4"/><path d="M4 17v2"/><path d="M5 18H3"/></svg>
<div class="t" id="t90" style="top:932px;font-size:12.19px;color:#15953f;letter-spacing:-0.126px;left:715px;">Extra Rating</div>
<div class="t" id="t91" style="top:952px;font-size:21.4px;color:#0d542b;font-weight:700;letter-spacing:-0.120px;left:693.3px;">4.0</div>
<svg class="a" style="left:519.37px;top:1013.62px;" width="22.56" height="22.67" viewBox="0 0 24 24" preserveAspectRatio="none" fill="none" stroke="#99a1af" stroke-width="1.380" stroke-linecap="round" stroke-linejoin="round"><path d="M16 21v-2a4 4 0 0 0-4-4H6a4 4 0 0 0-4 4v2"/><circle cx="9" cy="7" r="4"/><path d="M22 21v-2a4 4 0 0 0-3-3.87"/><path d="M16 3.13a4 4 0 0 1 0 7.75"/></svg>
<div class="t" id="t92" style="top:1006px;font-size:15.81px;color:#6a7282;letter-spacing:-0.184px;left:549.1px;">Reviewed by</div>
<div class="t" id="t93" style="top:1024px;font-size:19.48px;color:#101828;letter-spacing:0.027px;-webkit-text-stroke:0.12px #101828;left:549.1px;">Rajnikant Patel</div>
<div class="a" style="left:859.3px;top:718.6px;width:351px;height:340.5px;background:#fff;border:2px solid #e5e7eb;border-radius:13px;"></div>
<div class="t" id="t94" style="top:741px;font-size:17.91px;color:#101828;font-weight:700;letter-spacing:-0.300px;left:880px;">Diya Verma</div>
<div class="t" id="t95" style="top:766px;font-size:15.67px;color:#6a7282;letter-spacing:-0.044px;left:880px;">Developer</div>
<svg class="a" style="left:880.41px;top:802.6px;" width="14.28" height="14.4" viewBox="0 0 24 24" preserveAspectRatio="none" fill="none" stroke="#4a5565" stroke-width="2.678" stroke-linecap="round" stroke-linejoin="round"><circle cx="12" cy="12" r="10"/><polyline points="12 6 12 12 16 14"/></svg>
<div class="t" id="t96" style="top:801px;font-size:18.67px;color:#4a5565;letter-spacing:-0.133px;left:903.7px;">01/09/2025</div>
<div class="a" style="left:880px;top:830.4px;width:75.3px;height:24.5px;background:#fffbea;border:1px solid #fbd98a;border-radius:7px;"></div>
<div class="t" id="t97" style="top:838px;font-size:11.97px;color:#b4540a;letter-spacing:-0.759px;left:884.9px;">JEWELLERY</div>
<div class="a" style="left:966px;top:832.5px;width:147.5px;height:22.4px;background:linear-gradient(90deg,#ff6c0c,#f64e02);border-radius:6px;"></div>
<svg class="a" style="left:970.1px;top:837.7px" width="10.8" height="11.2" viewBox="0 0 10.8 11.2"><ellipse cx="5.4" cy="4.5" rx="5.3" ry="4.4" fill="#f4f6f9"/><path d="M1.6 7.2 L1.2 11 L4 8.4 Z" fill="#dfe6ee"/><circle cx="3.1" cy="4.6" r="0.65" fill="#707782"/><circle cx="5.4" cy="4.6" r="0.65" fill="#707782"/><circle cx="7.7" cy="4.6" r="0.65" fill="#707782"/></svg>
<div class="t" id="t98" style="top:838px;font-size:11.66px;color:#ffffff;letter-spacing:-0.605px;left:984.7px;">CUSTOMER FEEDBACK</div>
<div class="t" id="t99" style="top:873px;font-size:11.87px;color:#4a5565;letter-spacing:-0.112px;left:880.7px;">Overall Score</div>
<div class="t" id="t100" style="top:872px;font-size:12.53px;color:#101828;font-weight:700;letter-spacing:-0.366px;right:36.51px;">10.0/15</div>
<div class="a" style="left:879.9px;top:893.3px;width:309.9px;height:7.5px;background:#e5e7eb;border-radius:4px;"></div>
<div class="a" style="left:879.9px;top:893.3px;width:194.2px;height:7.5px;background:linear-gradient(180deg,#1f78c8,#1266b4);border-radius:4px;"></div>
<div class="a" style="left:880.1px;top:918.2px;width:149.2px;height:69.9px;background:linear-gradient(135deg,#eef4fe,#e3edfd);border:1px solid #bfd7fd;border-radius:9px;"></div>
<svg class="a" style="left:891.96px;top:930.35px;" width="14.88" height="15.02" viewBox="0 0 24 24" preserveAspectRatio="none" fill="none" stroke="#2563eb" stroke-width="2.248" stroke-linecap="round" stroke-linejoin="round"><polygon points="12 2 15.09 8.26 22 9.27 17 14.14 18.18 21.02 12 17.77 5.82 21.02 7 14.14 2 9.27 8.91 8.26 12 2"/></svg>
<div class="t" id="t101" style="top:932px;font-size:12.22px;color:#2b5fd9;letter-spacing:-0.194px;left:915.8px;">Total Rating</div>
<div class="t" id="t102" style="top:952px;font-size:21.39px;color:#1c398e;font-weight:700;letter-spacing:-0.005px;left:892.8px;">08.0</div>
<div class="a" style="left:1040.8px;top:918.2px;width:148.9px;height:69.9px;background:linear-gradient(135deg,#effdf4,#e4fbeb);border:1px solid #b6f2c9;border-radius:9px;"></div>
<svg class="a" style="left:1052.7px;top:930.06px;" width="15.65" height="16.07" viewBox="0 0 24 24" preserveAspectRatio="none" fill="none" stroke="#16a34a" stroke-width="1.967" stroke-linecap="round" stroke-linejoin="round"><path d="M9.937 15.5A2 2 0 0 0 8.5 14.063l-6.135-1.582a.5.5 0 0 1 0-.962L8.5 9.936A2 2 0 0 0 9.937 8.5l1.582-6.135a.5.5 0 0 1 .963 0L14.063 8.5A2 2 0 0 0 15.5 9.937l6.135 1.581a.5.5 0 0 1 0 .964L15.5 14.063a2 2 0 0 0-1.437 1.437l-1.582 6.135a.5.5 0 0 1-.963 0z"/><path d="M20 3v4"/><path d="M22 5h-4"/><path d="M4 17v2"/><path d="M5 18H3"/></svg>
<div class="t" id="t103" style="top:932px;font-size:12.19px;color:#15953f;letter-spacing:-0.126px;left:1075.3px;">Extra Rating</div>
<div class="t" id="t104" style="top:951px;font-size:21.03px;color:#0d542b;font-weight:700;letter-spacing:0.037px;left:1053.6px;">4.5</div>
<svg class="a" style="left:879.67px;top:1013.62px;" width="22.56" height="22.67" viewBox="0 0 24 24" preserveAspectRatio="none" fill="none" stroke="#99a1af" stroke-width="1.380" stroke-linecap="round" stroke-linejoin="round"><path d="M16 21v-2a4 4 0 0 0-4-4H6a4 4 0 0 0-4 4v2"/><circle cx="9" cy="7" r="4"/><path d="M22 21v-2a4 4 0 0 0-3-3.87"/><path d="M16 3.13a4 4 0 0 1 0 7.75"/></svg>
<div class="t" id="t105" style="top:1006px;font-size:15.81px;color:#6a7282;letter-spacing:-0.184px;left:909.4px;">Reviewed by</div>
<div class="t" id="t106" style="top:1024px;font-size:19.58px;color:#101828;letter-spacing:0.067px;-webkit-text-stroke:0.12px #101828;left:909.4px;">Nishant Patel</div>
<div class="a" style="left:123px;top:63px;width:1103px;height:831px;overflow:hidden;"><div class="a" style="left:-123px;top:249.4px;width:432.5px;height:324.4px;border-radius:31px;box-shadow:0 6px 36px 4px rgba(0,0,0,0.045);"></div></div>
<div class="a" style="left:0px;top:312.4px;width:432.5px;height:324.4px;background:#ffffff;border:4.5px solid #e3e9f7;border-radius:31px;box-shadow:0 10px 30px rgba(0,0,0,0.04);"></div>
<div class="a" style="left:21.5px;top:335.2px;width:392.8px;height:281.5px;background:#ffffff;border:2px solid #e5e7eb;border-radius:13px;"></div>
<div class="a" style="left:37.6px;top:363.5px;width:51.8px;height:53.7px;background:linear-gradient(135deg,#f3f7ff,#e6eefd);border:2px solid #c9d4fb;border-radius:13px;box-shadow:0 4px 10px rgba(30,60,120,0.18);"></div>
<svg class="a" style="left:45.95px;top:373.1px;" width="34.2" height="34.4" viewBox="0 0 24 24" preserveAspectRatio="none" fill="none" stroke="#1a6fc0" stroke-width="1.959" stroke-linecap="round" stroke-linejoin="round"><path d="M16 21v-2a4 4 0 0 0-4-4H6a4 4 0 0 0-4 4v2"/><circle cx="9" cy="7" r="4"/><polyline points="16 11 18 13 22 9"/></svg>
<div class="t" id="t107" style="top:368px;font-size:22.11px;color:#0f172b;font-weight:700;letter-spacing:-0.260px;left:104.8px;">Daily Grooming Monitoring</div>
<div class="t" id="t108" style="top:397px;font-size:15.78px;color:#4a5565;letter-spacing:0.025px;left:105.5px;">Track daily grooming and professional</div>
<div class="t" id="t109" style="top:417px;font-size:15.96px;color:#4a5565;letter-spacing:0.102px;left:105.5px;">conduct of staff</div>
<div class="t" id="t110" style="top:458px;font-size:16.07px;color:#4a5565;letter-spacing:0.068px;left:48.9px;">Today:</div>
<div class="t" id="t111" style="top:458px;font-size:16.28px;color:#9810fa;-webkit-text-stroke:0.3px #9810fa;right:841.35px;">24</div>
<div class="t" id="t112" style="top:490px;font-size:15.99px;color:#4a5565;letter-spacing:-0.023px;left:47.9px;">Pending:</div>
<div class="t" id="t113" style="top:488px;font-size:16.28px;color:#9810fa;-webkit-text-stroke:0.3px #9810fa;right:841.35px;">3</div>
<div class="t" id="t114" style="top:518px;font-size:16.04px;color:#4a5565;letter-spacing:-0.019px;left:48.9px;">Compliant:</div>
<div class="t" id="t115" style="top:518px;font-size:16.28px;color:#9810fa;-webkit-text-stroke:0.3px #9810fa;right:841.35px;">21</div>
<div class="a" style="left:48.4px;top:558.9px;width:339.1px;height:37.9px;background:linear-gradient(180deg,#2879c6,#0b5eb0);border-radius:8px;box-shadow:0 3px 6px rgba(10,60,120,0.25);"></div>
<div class="t" id="t116" style="top:568px;font-size:16.09px;color:#ffffff;letter-spacing:-0.103px;-webkit-text-stroke:0.15px #ffffff;left:158.6px;">View Details</div>
<svg class="a" style="left:262.95px;top:569.75px;" width="19.6" height="16.2" viewBox="0 0 24 24" preserveAspectRatio="none" fill="none" stroke="#ffffff" stroke-width="2.145" stroke-linecap="round" stroke-linejoin="round"><path d="m9 18 6-6-6-6"/></svg>
</body></html>
